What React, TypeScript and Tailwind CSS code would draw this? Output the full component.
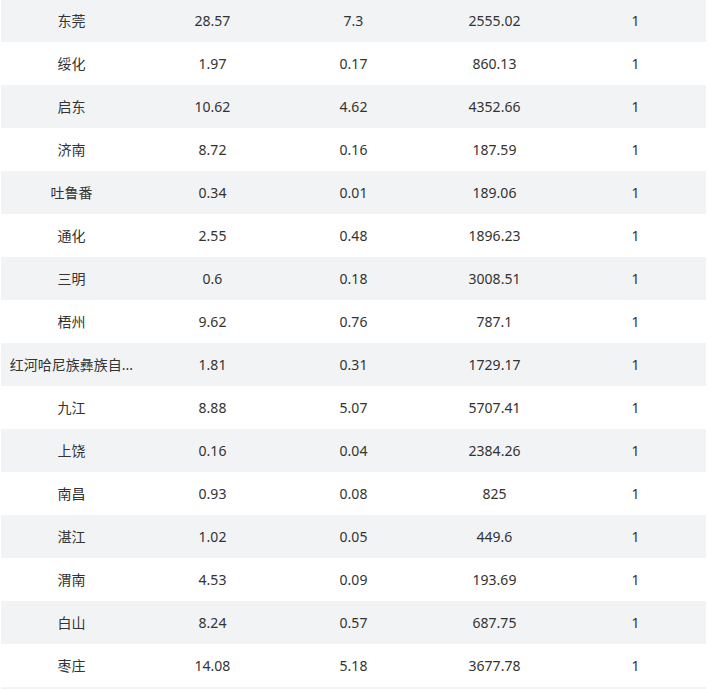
import { FC } from "react";

type Row = [string, string, string, string, string];

const rows: Row[] = [
  ["东莞", "28.57", "7.3", "2555.02", "1"],
  ["绥化", "1.97", "0.17", "860.13", "1"],
  ["启东", "10.62", "4.62", "4352.66", "1"],
  ["济南", "8.72", "0.16", "187.59", "1"],
  ["吐鲁番", "0.34", "0.01", "189.06", "1"],
  ["通化", "2.55", "0.48", "1896.23", "1"],
  ["三明", "0.6", "0.18", "3008.51", "1"],
  ["梧州", "9.62", "0.76", "787.1", "1"],
  ["红河哈尼族彝族自...", "1.81", "0.31", "1729.17", "1"],
  ["九江", "8.88", "5.07", "5707.41", "1"],
  ["上饶", "0.16", "0.04", "2384.26", "1"],
  ["南昌", "0.93", "0.08", "825", "1"],
  ["湛江", "1.02", "0.05", "449.6", "1"],
  ["渭南", "4.53", "0.09", "193.69", "1"],
  ["白山", "8.24", "0.57", "687.75", "1"],
  ["枣庄", "14.08", "5.18", "3677.78", "1"],
  ["", "", "", "", ""],
];

const CityRow: FC<{ row: Row; index: number }> = ({ row, index }) => (
  <div
    className={`grid grid-cols-5 h-[43px] items-center ${
      index % 2 === 0 ? "bg-[#f2f3f5]" : "bg-white"
    }`}
  >
    {row.map((cell, i) => (
      <div key={i} className="flex justify-center whitespace-nowrap">
        {cell}
      </div>
    ))}
  </div>
);

export default function App() {
  return (
    <div
      className="w-[709px] h-[689px] overflow-hidden bg-white pl-px pr-[3px] text-[14px] text-[#333333]"
      style={{ fontFamily: '"Segoe UI", "Noto Sans", "Noto Sans CJK SC", sans-serif' }}
    >
      <div className="-mt-px">
        {rows.map((row, i) => (
          <CityRow key={i} row={row} index={i} />
        ))}
      </div>
    </div>
  );
}
